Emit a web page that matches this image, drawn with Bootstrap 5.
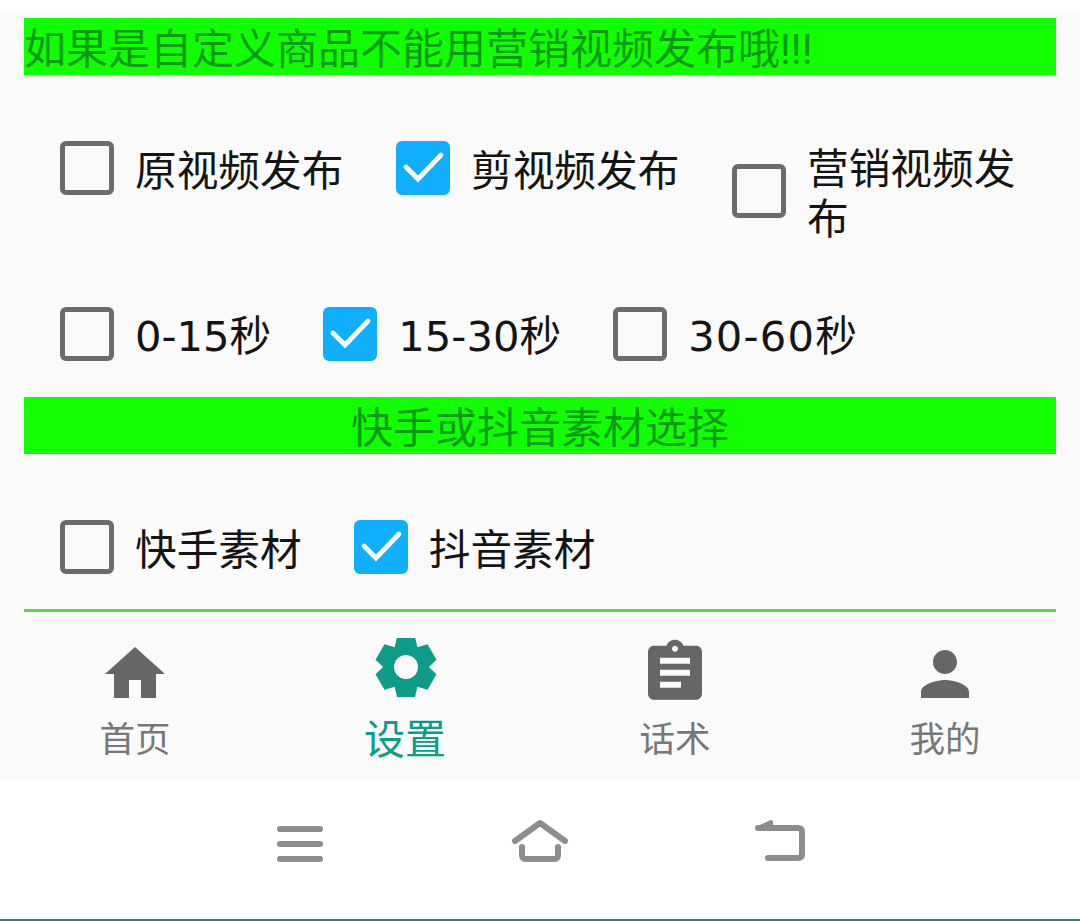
<!DOCTYPE html>
<html lang="zh-CN">

<head>
	<meta charset="UTF-8">
	<meta name="viewport" content="width=device-width, initial-scale=1.0">
	<title>设置</title>
	<link href="https://cdn.jsdelivr.net/npm/bootstrap@5.3.3/dist/css/bootstrap.min.css" rel="stylesheet"
		crossorigin="anonymous">
	<script src="https://cdn.jsdelivr.net/npm/bootstrap@5.3.3/dist/js/bootstrap.bundle.min.js"
		crossorigin="anonymous"></script>
	<style>
		body {
			background: #fff;
			font-family: "Noto Sans CJK SC", "Liberation Sans", sans-serif;
			color: #141414;
		}

		.screen-top { height: 11px; }

		.page-area {
			background: #fafafa;
			height: 601px;
			padding: 7px 24px 0;
		}

		.green-bar {
			background: #11ff00;
			color: #0b9a16;
			height: 57px;
			font-family: Roboto, "Noto Sans CJK SC", sans-serif;
			font-size: 42px;
			line-height: 63px;
			white-space: nowrap;
		}

		.option-grid {
			display: grid;
			grid-template-columns: repeat(3, 336px);
			padding-left: 36px;
			margin-top: 66px;
		}

		.option-line {
			display: flex;
			gap: 52px;
			padding-left: 36px;
		}

		.line-time {
			margin-top: 66px;
			margin-bottom: 36px;
			font-family: "DejaVu Sans", "Noto Sans CJK SC", sans-serif;
		}

		.line-time span { padding-top: 6px; line-height: 48px; }
		.line-time .time-wide { letter-spacing: 1.2px; }
		.line-source { margin-top: 66px; }

		.opt-item {
			display: flex;
			align-items: center;
			gap: 21px;
			margin: 0;
			font-size: 41.7px;
			line-height: 50px;
			white-space: nowrap;
		}

		.option-grid .opt-item {
			align-self: start;
			white-space: normal;
			padding-right: 40px;
		}

		.opt-item .form-check-input {
			flex: none;
			width: 54px;
			height: 54px;
			margin: 0;
			background-color: transparent;
			border: 5px solid #6b6b6b;
			border-radius: 6px;
		}

		.opt-item .form-check-input:checked {
			background-color: #10aeff;
			border-color: #10aeff;
			background-size: 44px 44px;
			background-image: url("data:image/svg+xml,%3Csvg xmlns='http://www.w3.org/2000/svg' viewBox='0 0 44 44'%3E%3Cpath fill='none' stroke='%23fff' stroke-width='4.8' stroke-linecap='round' d='M5 21l12 12L40 9'/%3E%3C/svg%3E");
		}

		.green-rule {
			height: 3px;
			margin: 35px 0 0;
			background: #4fdc3c;
			opacity: 1;
			border: 0;
		}

		.tab-bar {
			background: #fafafa;
			height: 168px;
		}

		.tab-item {
			width: 270px;
			padding-top: 26px;
			color: #777;
			font-size: 35.5px;
			line-height: 53px;
			text-align: center;
		}

		.tab-item svg {
			display: block;
			width: 72px;
			height: 72px;
			margin: 0 auto;
			fill: #666;
		}

		.tab-item.tab-on {
			color: #0d9c88;
			font-size: 41px;
		}

		.tab-item.tab-on svg { fill: #0d9c88; }
		.gear-hole { fill: #fafafa; }

		.sys-bar {
			height: 139px;
			padding-bottom: 9px;
			gap: 180px;
		}

		.sys-bar svg {
			width: 60px;
			height: 60px;
			fill: none;
			stroke: #8c8c8c;
			stroke-width: 6;
			stroke-linecap: round;
			stroke-linejoin: round;
		}

		.sys-bar .back-head { fill: #8c8c8c; stroke-width: 4; }

		.teal-edge {
			height: 2px;
			background: #009a84;
		}
	</style>
</head>

<body>
	<div class="screen-top"></div>

	<div class="page-area">
		<div class="green-bar">如果是自定义商品不能用营销视频发布哦!!!</div>

		<div class="option-grid">
			<label class="opt-item"><input class="form-check-input" type="checkbox"><span>原视频发布</span></label>
			<label class="opt-item"><input class="form-check-input" type="checkbox" checked><span>剪视频发布</span></label>
			<label class="opt-item"><input class="form-check-input" type="checkbox"><span>营销视频发布</span></label>
		</div>

		<div class="option-line line-time">
			<label class="opt-item"><input class="form-check-input" type="checkbox"><span>0-15秒</span></label>
			<label class="opt-item"><input class="form-check-input" type="checkbox" checked><span>15-30秒</span></label>
			<label class="opt-item"><input class="form-check-input" type="checkbox"><span class="time-wide">30-60秒</span></label>
		</div>

		<div class="green-bar text-center">快手或抖音素材选择</div>

		<div class="option-line line-source">
			<label class="opt-item"><input class="form-check-input" type="checkbox"><span>快手素材</span></label>
			<label class="opt-item"><input class="form-check-input" type="checkbox" checked><span>抖音素材</span></label>
		</div>

		<hr class="green-rule">
	</div>

	<nav class="tab-bar d-flex">
		<div class="tab-item">
			<svg viewBox="0 0 24 24"><path d="M10 20v-6h4v6h5v-8h3L12 3 2 12h3v8z"/></svg>
			<div>首页</div>
		</div>
		<div class="tab-item tab-on">
			<svg viewBox="-37 -29 72 72">
				<circle r="21"/>
				<path d="M-9 -30h18l3 13h-24z"/>
				<path transform="rotate(60)" d="M-9 -30h18l3 13h-24z"/>
				<path transform="rotate(120)" d="M-9 -30h18l3 13h-24z"/>
				<path transform="rotate(180)" d="M-9 -30h18l3 13h-24z"/>
				<path transform="rotate(240)" d="M-9 -30h18l3 13h-24z"/>
				<path transform="rotate(300)" d="M-9 -30h18l3 13h-24z"/>
				<circle class="gear-hole" r="12"/>
			</svg>
			<div>设置</div>
		</div>
		<div class="tab-item">
			<svg viewBox="0 0.4 24 24"><path d="M19 3h-4.18C14.4 1.84 13.3 1 12 1c-1.3 0-2.4.84-2.82 2H5c-1.1 0-2 .9-2 2v14c0 1.1.9 2 2 2h14c1.1 0 2-.9 2-2V5c0-1.1-.9-2-2-2zm-7 0c.55 0 1 .45 1 1s-.45 1-1 1-1-.45-1-1 .45-1 1-1zm2 14H7v-2h7v2zm3-4H7v-2h10v2zm0-4H7V7h10v2z"/></svg>
			<div>话术</div>
		</div>
		<div class="tab-item">
			<svg viewBox="0 0 24 24"><path d="M12 12c2.21 0 4-1.79 4-4s-1.79-4-4-4-4 1.79-4 4 1.79 4 4 4zm0 2c-2.67 0-8 1.34-8 4v2h16v-2c0-2.66-5.33-4-8-4z"/></svg>
			<div>我的</div>
		</div>
	</nav>

	<div class="sys-bar d-flex justify-content-center align-items-center">
		<svg viewBox="0 0 60 60"><path d="M10 14h40M10 29h40M10 44h40"/></svg>
		<svg viewBox="0 0 60 60"><path d="M5 26L30 8l25 18M12 32v8q0 4 4 4h28q4 0 4-4v-8"/></svg>
		<svg viewBox="0 0 60 60"><path d="M8 13h40q4 0 4 4v22q0 4-4 4H18"/><path class="back-head" d="M8 13L21 7v6z"/></svg>
	</div>
	<div class="teal-edge"></div>
</body>

</html>
